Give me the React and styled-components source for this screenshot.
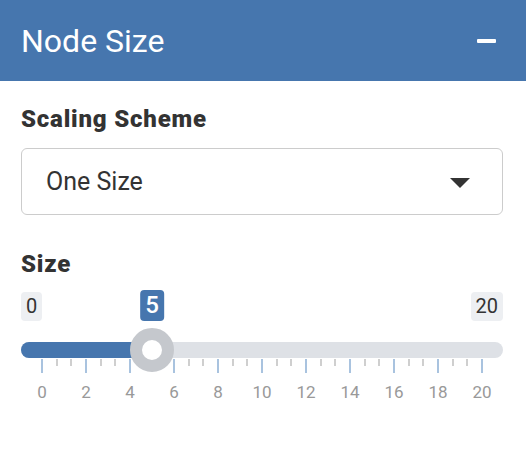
import React from 'react';
import styled, { createGlobalStyle } from 'styled-components';

const GlobalStyle = createGlobalStyle`
  body {
    margin: 0;
    background: #fff;
    font-family: Roboto, "Liberation Sans", sans-serif;
  }
`;

const MIN = 0;
const MAX = 20;
const VALUE = 5;
const GRID_PAD = 21;
const GRID_SPAN = 440;

const posOf = (v) => GRID_PAD + ((v - MIN) / (MAX - MIN)) * GRID_SPAN;

const App = () => {
  const ticks = [];
  for (let v = MIN; v <= MAX; v += 2) {
    ticks.push({ x: posOf(v), major: true, label: v });
    if (v < MAX) {
      ticks.push({ x: posOf(v + 2 / 3), major: false });
      ticks.push({ x: posOf(v + 4 / 3), major: false });
    }
  }
  const handleX = posOf(VALUE);

  return (
    <>
      <GlobalStyle />
      <Panel>
        <Header>
          <Title>Node Size</Title>
          <Collapse aria-label="collapse" />
        </Header>
        <Body>
          <Label>Scaling Scheme</Label>
          <Select>
            <span>One Size</span>
            <Caret />
          </Select>
          <Label $gap={35}>Size</Label>
          <Slider>
            <LimitRow>
              <Limit>{MIN}</Limit>
              <Limit>{MAX}</Limit>
              <Bubble style={{ left: handleX }}>{VALUE}</Bubble>
            </LimitRow>
            <Track>
              <Fill style={{ width: handleX }} />
              <Handle style={{ left: handleX }} />
            </Track>
            <Grid>
              {ticks.map((t, i) => (
                <React.Fragment key={i}>
                  <Tick $major={t.major} style={{ left: t.x }} />
                  {t.major && <TickLabel style={{ left: t.x }}>{t.label}</TickLabel>}
                </React.Fragment>
              ))}
            </Grid>
          </Slider>
        </Body>
      </Panel>
    </>
  );
};

const Panel = styled.div`
  width: 526px;
`;

const Header = styled.div`
  height: 81px;
  background: #4676ae;
  display: flex;
  align-items: center;
  justify-content: space-between;
  padding: 0 30px 0 21px;
  box-sizing: border-box;
`;

const Title = styled.h2`
  margin: 0;
  font-size: 32px;
  font-weight: 400;
  color: #fff;
`;

const Collapse = styled.span`
  width: 19px;
  height: 4px;
  background: #fff;
  border-radius: 1px;
`;

const Body = styled.div`
  padding: 24px 23px 0 21px;
`;

const Label = styled.div`
  font-size: 24px;
  line-height: 28px;
  font-weight: 900;
  letter-spacing: 0.8px;
  color: #333;
  margin-top: ${(p) => p.$gap || 0}px;
`;

const Select = styled.div`
  margin-top: 15px;
  height: 67px;
  box-sizing: border-box;
  border: 1px solid #ccc;
  border-radius: 6px;
  display: flex;
  align-items: center;
  justify-content: space-between;
  padding: 0 32px 0 24px;
  font-size: 25px;
  color: #333;
`;

const Caret = styled.span`
  width: 0;
  height: 0;
  border-left: 10px solid transparent;
  border-right: 10px solid transparent;
  border-top: 10px solid #333;
  margin-top: 2px;
`;

const Slider = styled.div`
  margin-top: 14px;
  position: relative;
`;

const LimitRow = styled.div`
  position: relative;
  height: 30px;
  display: flex;
  justify-content: space-between;
  align-items: flex-start;
`;

const Limit = styled.span`
  background: #edeff2;
  color: #333;
  font-size: 20px;
  line-height: 29px;
  padding: 0 5px;
  border-radius: 4px;
`;

const Bubble = styled.span`
  position: absolute;
  top: -2px;
  transform: translateX(-50%);
  background: #4676ae;
  color: #fff;
  font-size: 24px;
  font-weight: 500;
  line-height: 31px;
  padding: 0 5px;
  border-radius: 4px;
`;

const Track = styled.div`
  position: relative;
  margin-top: 20px;
  height: 16px;
  border-radius: 8px;
  background: #dee1e6;
`;

const Fill = styled.div`
  position: absolute;
  left: 0;
  top: 0;
  bottom: 0;
  background: #4676ae;
  border-radius: 8px 0 0 8px;
`;

const Handle = styled.div`
  position: absolute;
  top: 50%;
  width: 44px;
  height: 44px;
  box-sizing: border-box;
  border: 12px solid #c5c8cd;
  border-radius: 50%;
  background: #fff;
  transform: translate(-50%, -50%);
  z-index: 2;
`;

const Grid = styled.div`
  position: relative;
  height: 45px;
  margin-top: 1px;
`;

const Tick = styled.span`
  position: absolute;
  top: 0;
  width: 2px;
  margin-left: -1px;
  height: ${(p) => (p.$major ? 14 : 7)}px;
  background: ${(p) => (p.$major ? '#a9c3df' : '#cfcfcf')};
`;

const TickLabel = styled.span`
  position: absolute;
  top: 23px;
  transform: translateX(-50%);
  font-size: 17px;
  line-height: 20px;
  color: #999;
`;

export default App;
